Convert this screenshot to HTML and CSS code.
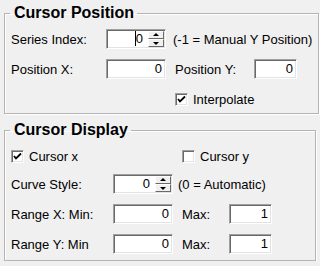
FILE: index.html
```html
<!DOCTYPE html>
<html lang="en">
<head>
    <meta charset="UTF-8">
    <title>Cursor Settings</title>
    <link rel="stylesheet" href="styles.css">
</head>
<body>
    <div class="panel">
        <fieldset class="group group-position">
            <legend>Cursor Position</legend>
            <div class="row">
                <label class="lbl lbl-a">Series Index:</label>
                <div class="field spin w60"><span class="val caret">0</span><span class="spin-btns"><span class="btn up"></span><span class="btn down"></span></span></div>
                <span class="note">(-1 = Manual Y Position)</span>
            </div>
            <div class="row">
                <label class="lbl lbl-a">Position X:</label>
                <div class="field w60"><span class="val">0</span></div>
                <label class="lbl lbl-py">Position Y:</label>
                <div class="field w43"><span class="val">0</span></div>
            </div>
            <div class="row">
                <label class="check check-interp"><span class="box checked"><svg width="9" height="9" viewBox="0 0 9 9"><path d="M1 4 L3 6.5 L8 1.5" fill="none" stroke="#000" stroke-width="1.8"/></svg></span>Interpolate</label>
            </div>
        </fieldset>

        <fieldset class="group group-display">
            <legend>Cursor Display</legend>
            <div class="row row-checks">
                <label class="check check-x"><span class="box checked"><svg width="9" height="9" viewBox="0 0 9 9"><path d="M1 4 L3 6.5 L8 1.5" fill="none" stroke="#000" stroke-width="1.8"/></svg></span>Cursor x</label>
                <label class="check"><span class="box"></span>Cursor y</label>
            </div>
            <div class="row">
                <label class="lbl lbl-b">Curve Style:</label>
                <div class="field spin w60"><span class="val">0</span><span class="spin-btns"><span class="btn up"></span><span class="btn down"></span></span></div>
                <span class="note note-b">(0 = Automatic)</span>
            </div>
            <div class="row">
                <label class="lbl lbl-b">Range X: Min:</label>
                <div class="field w60"><span class="val">0</span></div>
                <label class="lbl lbl-max">Max:</label>
                <div class="field w43"><span class="val">1</span></div>
            </div>
            <div class="row">
                <label class="lbl lbl-b">Range Y: Min</label>
                <div class="field w60"><span class="val">0</span></div>
                <label class="lbl lbl-max">Max:</label>
                <div class="field w43"><span class="val">1</span></div>
            </div>
        </fieldset>
    </div>
</body>
</html>
```

FILE: styles.css
```css
html,body{margin:0;background:#f0f0f0}
body{font-family:"Liberation Sans",Arial,sans-serif;font-size:13px;color:#000}
.panel{padding:4px 4px 0 4px;width:312px}

.group{
    margin:0;
    padding:7px 6px 4px 6px;
    border:1px solid #b4b4b4;
    box-shadow:inset 1px 1px 0 #fff, 1px 1px 0 #fff;
    display:flex;
    flex-direction:column;
    gap:10px;
}
.group legend{
    font-weight:700;
    font-size:16px;
    line-height:18px;
    padding:0 3px 0 4px;
    margin-left:-1px;
}
.group-display{margin-top:7px;padding-bottom:6px}
.group-display .row-checks{margin-bottom:-2px}

.row{display:flex;align-items:center;height:20px}
.lbl{flex:none}
.lbl-a{width:95px}
.lbl-b{width:102px}
.lbl-py{width:79px;margin-left:9px}
.lbl-max{width:47px;margin-left:9px}
.note{margin-left:7px;white-space:nowrap}
.note-b{margin-left:5px}

/* sunken edit box */
.field{
    box-sizing:border-box;
    height:20px;
    display:flex;
    align-items:center;
    background:#fff;
    border:1px solid;
    border-color:#a0a0a0 #fff #fff #a0a0a0;
    box-shadow:inset 1px 1px 0 #696969, inset -1px -1px 0 #e3e3e3;
    flex:none;
}
.w60{width:60px}
.w43{width:43px}
.field .val{flex:1;text-align:right;padding-right:3px;line-height:16px}
.caret::before{content:"";display:inline-block;width:1px;height:15px;background:#000;vertical-align:-3px}

.spin .val{padding-right:5px}
.spin-btns{display:flex;flex-direction:column;width:16px;height:16px;margin:1px 1px 1px 0}
.btn{
    position:relative;
    flex:1;
    box-sizing:border-box;
    background:#f0f0f0;
    border:1px solid;
    border-color:#fff #696969 #696969 #fff;
}
.btn::after{
    content:"";
    position:absolute;
    left:50%;
    top:50%;
    margin-left:-3px;
    border-left:3px solid transparent;
    border-right:3px solid transparent;
}
.btn.up::after{border-bottom:3px solid #000;margin-top:-2px}
.btn.down::after{border-top:3px solid #000;margin-top:-1px}

/* checkbox */
.check{display:flex;align-items:center;gap:5px}
.check-interp{margin-left:164px}
.check-x{width:171px}
.box{
    box-sizing:border-box;
    width:13px;
    height:13px;
    background:#fff;
    border:1px solid;
    border-color:#a0a0a0 #fff #fff #a0a0a0;
    box-shadow:inset 1px 1px 0 #696969, inset -1px -1px 0 #e3e3e3;
    display:flex;
    align-items:center;
    justify-content:center;
}
.box svg{display:block}
```
